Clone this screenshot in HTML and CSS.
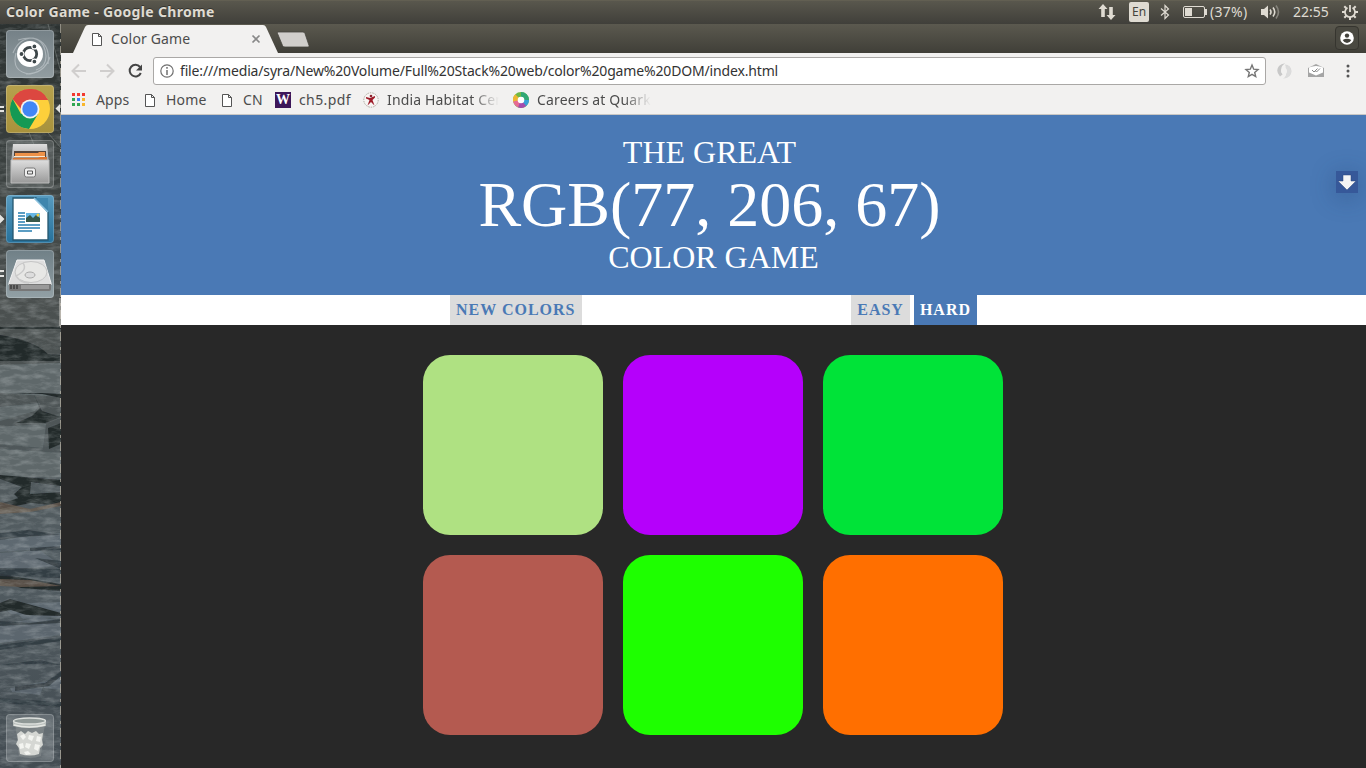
FILE: index.html
```html
<!DOCTYPE html>
<html lang="en">
<head>
<meta charset="utf-8">
<title>Color Game</title>
<link rel="stylesheet" href="styles.css">
</head>
<body>
<div class="desktop">
  <header class="panel">
    <span class="panel-title">Color Game - Google Chrome</span>
    <div class="indicators">
      <svg class="i-net" width="18" height="16" viewBox="0 0 18 16"><path d="M5 0L9.500 5H6.800V13H3.200V5H.5zM13 16L8.500 11H11.200V3H14.800V11H17.500z" fill="#dfdbd2"/></svg>
      <span class="i-lang">En</span>
      <svg class="i-bt" width="10" height="16" viewBox="0 0 10 16"><path d="M1 4.500L8.500 11L5 14.500V1.500L8.500 5L1 11.500" fill="none" stroke="#dfdbd2" stroke-width="1.200"/></svg>
      <svg class="i-bat" width="24" height="12" viewBox="0 0 24 12"><rect x=".5" y=".5" width="21" height="11" rx="1.500" fill="none" stroke="#dfdbd2"/><path d="M2 2h7v8H2zM22 3h2v6h-2z" fill="#dfdbd2"/></svg>
      <span class="i-pct">(37%)</span>
      <svg class="i-vol" width="20" height="16" viewBox="0 0 20 16"><path d="M0 5h3l4-3.500v13L3 11H0z" fill="#dfdbd2"/><path d="M9 5.500q2 2.500 0 5M12 3.500q3.500 4.500 0 9" fill="none" stroke="#dfdbd2" stroke-width="1.600"/><path d="M15 1.500q5 6.500 0 13" fill="none" stroke="#85837b" stroke-width="1.600"/></svg>
      <span class="i-time">22:55</span>
      <svg class="i-gear" width="16" height="16" viewBox="0 0 16 16"><g fill="none" stroke="#dfdbd2"><path d="M5.500 3.800A5 5 0 1 0 10.500 3.800" stroke-width="1.700"/><path d="M8 1v7" stroke-width="1.800"/><path d="M2.300 2.300l2 2M13.700 2.300l-2 2M0 8h3M13 8h3M2.300 13.700l2-2M13.700 13.700l-2-2M8 13v3" stroke-width="2"/></g></svg>
    </div>
  </header>

  <div class="workspace">
    <aside class="launcher">
      <svg class="wallpaper" width="61" height="744" viewBox="0 24 61 744">
        <defs>
          <linearGradient id="stone" x1="0" y1="0" x2="0" y2="1"><stop offset="0" stop-color="#2c3231"/><stop offset=".2" stop-color="#3b4140"/><stop offset=".36" stop-color="#4a4f4e"/><stop offset=".5" stop-color="#4d5455"/><stop offset=".7" stop-color="#535d62"/><stop offset="1" stop-color="#434c52"/></linearGradient>
          <filter id="grain" x="0" y="0" width="1" height="1"><feTurbulence type="fractalNoise" baseFrequency=".07 .2" numOctaves="4" seed="8"/><feColorMatrix values="0 0 0 0 .62  0 0 0 0 .66  0 0 0 0 .67  1.600 0 0 0 -.65"/></filter>
          <filter id="soft"><feGaussianBlur stdDeviation=".7"/></filter>
        </defs>
        <path d="M0 24h61v744H0z" fill="url(#stone)"/>
        <g filter="url(#soft)">
          <path d="M0 365l61-2v34l-61-4zM0 407l40-4-5 8-35 10zM0 427l46-3-3 24-43-4zM0 449l61 4v24H0z" fill="#5e686a"/>
          <path d="M0 537h28l33-3v14l-61 4zM32 537l29-4v14l-26-2zM0 553l40-3 21 16-61 4zM0 604l61-2v16l-50-4zM10 606l51-3v14l-38 2zM0 625l40-8 21 4v14l-61 8zM44 682l17-6v14l-17-2zM10 688l35-7-5 14-28-3z" fill="#66727a" opacity=".6"/>
          <path d="M0 329h61v-2H0zM0 335c20 3 38 9 48 19l13 1v6H0zM0 394l42 0 19 4v-4l-19-1zM34 395l8 16 19 6-16 6h-29l16-7 8-8zM48 428l13-5v21l-12 5zM0 475l61 5v6l-30-4-1 12-10 6-6-6 8-7-22-8zM0 603l10-4 51 14v3l-35-1-15-5-11 2zM0 574l61 10v7l-40-3-21-7zM31 494l30-2v14l-30-3-31 6v-5z" fill="#232a2c"/>
          <path d="M0 533l28-3 33 5-32 1-29 4zM30 548l31-2v4l-31 1zM0 568l61 1-26-11 26 3v17l-61-2zM0 645l61-8v4l-61 9zM15 686l30-3 16-12v5l-12 10-34 5zM0 698l61 4v5l-61-4zM0 665l40-5 21 5-30-1zM0 621l30 2 31-4v4l-61 3z" fill="#303a40" opacity=".85"/>
          <path d="M0 502l30 7 31-7v4l-31 6-30 2zM0 579l30 1 31 6-40 1-21-1z" fill="#6b5e50" opacity=".75"/>
        </g>
        <path d="M0 24h61v744H0z" filter="url(#grain)" opacity=".4"/>
        <path d="M28 130l18 44M35 118l26 30M48 24l12 45" stroke="#aab1ad" stroke-width="1" opacity=".35"/>
        <path d="M60.500 24v744" stroke="#b9b3a5" stroke-dasharray="9 6 3 4" opacity=".7"/>
        <path d="M60 298v28" stroke="#d5d2cc" stroke-width="1"/>
        <path d="M0 106h4v2H0zM0 110h4v2H0zM0 270h4v2H0zM0 275h4v2H0zM0 214.500l4.500 4.500-4.500 4.500zM60 104l-4.500 4.500 4.500 4.500z" fill="#e4e4e1"/>
      </svg>

      <div class="tiles">
        <div class="tile dash"><svg width="48" height="48"><g fill="none" stroke="#d4dadd" stroke-width="1.200" opacity=".5"><path d="M12 10Q38 2 40 26Q40 37 30 40M10 23Q5 42 24 44M7 23Q13 8 27 8Q45 12 42 34M20 44Q38 44 44 27"/></g><circle cx="24" cy="24" r="13" fill="#fff"/><circle cx="24" cy="24" r="6.700" fill="none" stroke="#3e474a" stroke-width="2.800"/><g fill="#3e474a" stroke="#fff" stroke-width="1.200"><circle cx="15.500" cy="24" r="2.500"/><circle cx="28.400" cy="16.400" r="2.500"/><circle cx="28.400" cy="31.600" r="2.500"/></g></svg></div>
        <div class="tile chrome-tile"><svg width="48" height="48"><circle cx="24" cy="24" r="20" fill="#fdd03b"/><path d="M24 24L6.700 14A20 20 0 0 1 42 15H24z" fill="#de4a42"/><path d="M24 24L15 29L6.700 14A20 20 0 0 0 23 44l9-15z" fill="#149954"/><path d="M6.700 14A20 20 0 0 1 42 15H24q-8 0-9 9z" fill="#dc4740"/><circle cx="24" cy="24" r="9.500" fill="#f3f4f1"/><circle cx="24" cy="24" r="7.700" fill="#4286f5"/></svg></div>
        <div class="tile files"><svg width="48" height="48"><defs><linearGradient id="cab" x2="0" y2="1"><stop stop-color="#dedede"/><stop offset="1" stop-color="#999"/></linearGradient></defs><path d="M7 4h34l2 20H5z" fill="url(#cab)"/><path d="M8 11h32v11H8z" fill="#55443a"/><path d="M9 13h23l1-1h6v5H9z" fill="#ed9148"/><path d="M8 16h31v1.500H8z" fill="#f7e7d2"/><path d="M7 18h25l2-1h7v5H7z" fill="#d9742f"/><path d="M5 20h38v23H5z" fill="url(#cab)" stroke="#bdbdbd"/><rect x="18.500" y="28" width="11" height="9" rx="2" fill="#eee" stroke="#777"/><path d="M21.500 31h5v3h-5z" fill="#eee" stroke="#555"/></svg></div>
        <div class="tile writer"><svg width="48" height="48"><path d="M7 3h23l12 14v28H7z" fill="#fff" stroke="#26566e" stroke-width="1.300"/><path d="M28 3h14v15z" fill="#3f86ae"/><path d="M28 3l14 14" stroke="#8cc1dd" stroke-width="1.500"/><path d="M20 18h14v9H20z" fill="#66b6e4"/><path d="M20 27v-4l4-3 3 3 3-3 4 3v4z" fill="#36584b"/><circle cx="32" cy="20" r="1.500" fill="#f1cf43"/><path d="M12 18h7M12 21h7M12 24h7M12 27h7M12 30h22M12 33h22M12 36h14" stroke="#267db0" stroke-width="1.500"/></svg></div>
        <div class="tile drive"><svg width="48" height="48"><path d="M11 10h27l7 23v2H3v-2z" fill="#dedede" stroke="#f3f3f3"/><path d="M3 34h42v5q0 2-2 2H5q-2 0-2-2z" fill="#777"/><path d="M15 35h28v4H15z" fill="#9a9a9a"/><path d="M5 35v4M8 35v4M11 35v4" stroke="#222"/><ellipse cx="25" cy="22" rx="16" ry="10.500" fill="#e7e7e5" stroke="#c5c5c5"/><ellipse cx="24" cy="25" rx="5" ry="3" fill="#ddd" stroke="#aaa"/><path d="M17 13q5 7-7 13 4 7 13 7" fill="none" stroke="#cacaca" stroke-width="1.500"/></svg></div>
        <div class="tile trash"><svg width="48" height="48"><path d="M9 8l4 34q11 4 22 0l4-34z" fill="#8d9493" opacity=".5"/><path d="M11 20l4-3 4 3 3-3 4 2 4-2 3 3 4-1-1 7 1 5-3 3-1 6q-9 3-19 0l-1-6-3-4 2-4z" fill="#d5d7d3"/><path d="M14 22l4-2 2 3-3 3zM23 21l5 1-2 5-4-2zM31 22l4 1-1 5-4-1zM13 30l4-1 1 5-4 1zM20 29l5 1-2 5-4-2zM29 30l5 1-2 6-4-2zM18 38l4-1 3 3-5 1z" fill="#f3f4f0"/><path d="M7 7q17-5 33 0v5q-16 4-33 0z" fill="#b9bfbc"/><ellipse cx="23.500" cy="7" rx="16" ry="3" fill="#8f9896" stroke="#dcdfdc" stroke-width="1.300"/><path d="M8 11q15 4 31 0" stroke="#e5e7e3" stroke-width="1.300" fill="none"/></svg></div>
      </div>
    </aside>

    <main class="browser">
      <div class="tabstrip">
        <svg class="tab-shape" width="250" height="29" viewBox="0 0 250 29"><path d="M12 29L24 3Q25 1 27 1H202Q204 1 205 3L217 29z" fill="#f2f1f0"/><path d="M217 8h25q1.500 0 2 1.500l4 12q.5 1.500-1 1.500h-23q-2 0-2.500-1.500l-5-12q-.5-1.500.5-1.500z" fill="#d0cecb" stroke="#45443d" stroke-width=".8"/></svg>
        <div class="tab">
          <svg class="doc" width="12" height="15" viewBox="0 0 12 15"><path d="M1.500 1.500h6l3 3v9h-9zM7.500 1.500v3h3" fill="#fff" stroke="#555"/></svg>
          <span class="tab-title">Color Game</span>
          <svg width="10" height="10" viewBox="0 0 10 10"><path d="M1.500 1.500l7 7M8.500 1.500l-7 7" stroke="#888" stroke-width="1.700"/></svg>
        </div>
        <div class="profile"><svg width="14" height="14" viewBox="0 0 14 14"><circle cx="7" cy="7" r="6.800" fill="#fff"/><circle cx="7" cy="4.600" r="2.200" fill="#43423c"/><path d="M2.700 9q4.300-2.600 8.600 0-1.500 3-4.300 3T2.700 9z" fill="#43423c"/></svg></div>
      </div>

      <div class="toolbar">
        <svg class="nav-icons" width="75" height="18" viewBox="0 0 75 18"><path d="M15 9H2M8 2.500L1.500 9 8 15.500M29 9h13M36 2.500L42.500 9 36 15.500" fill="none" stroke="#d0cecd" stroke-width="2"/><path d="M69 5A5.800 5.800 0 1 0 69.800 11" fill="none" stroke="#444" stroke-width="2"/><path d="M71 2.500v6h-6z" fill="#444"/></svg>
        <div class="omnibox">
          <svg width="14" height="14" viewBox="0 0 14 14"><circle cx="7" cy="7" r="6.200" fill="none" stroke="#707070" stroke-width="1.200"/><path d="M7 6v5M7 3v1.700" stroke="#707070" stroke-width="1.500"/></svg>
          <span class="url">file:///media/syra/New%20Volume/Full%20Stack%20web/color%20game%20DOM/index.html</span>
          <svg class="star" width="16" height="16" viewBox="0 0 16 16"><path d="M8 2L9.700 6.200l4.300.3-3.300 2.900 1 4.200L8 11.400l-3.700 2.200 1-4.200L2 6.500l4.300-.3z" fill="none" stroke="#757575" stroke-width="1.400"/></svg>
        </div>
        <svg class="ext1" width="16" height="16" viewBox="0 0 16 16"><path d="M9 1.500A6.500 6.500 0 0 1 8.500 15q4-5 .5-13.500z" fill="#dadada"/><path d="M13 2.500Q17.500 8 13 13 10 16 7 15.500 13.500 12 9.500 4.500z" fill="#dcdcdc"/><path d="M4 13.500Q-1 8 3 3 6 0 9 .5 3 4 6.500 11.500z" fill="#c8c8c8"/><circle cx="8" cy="8" r="3" fill="#f2f1f0"/></svg>
        <svg class="ext2" width="16" height="14" viewBox="0 0 16 14"><path d="M0 4l8-4 8 4v9H0z" fill="#a5a5a5"/><path d="M1 3.500q7-3 14 0v5l-7 3-7-3z" fill="#fff"/><path d="M4 6l2 2 3.500-3.500M7.500 7l1 1L12 4.500" fill="none" stroke="#888"/></svg>
        <svg class="more" width="4" height="14" viewBox="0 0 4 14"><g fill="#555"><circle cx="2" cy="2" r="1.500"/><circle cx="2" cy="7" r="1.500"/><circle cx="2" cy="12" r="1.500"/></g></svg>
      </div>

      <nav class="bookmarks">
        <a class="bm bm-apps"><svg width="14" height="14" viewBox="0 0 14 14"><path d="M0 0h3v3H0zM5 0h3v3H5zM10 0h3v3h-3z" fill="#f23a30"/><path d="M0 5h3v3H0zM0 10h3v3H0z" fill="#30a653"/><path d="M5 5h3v3H5z" fill="#3c7cf3"/><path d="M10 5h3v3h-3zM10 10h3v3h-3z" fill="#f9b62d"/><path d="M5 10h3v3H5z" fill="#30a653"/></svg><span>Apps</span></a>
        <a class="bm bm-home"><svg width="12" height="15" viewBox="0 0 12 15"><path d="M1.500 1.500h6l3 3v9h-9zM7.500 1.500v3h3" fill="#fff" stroke="#555"/></svg><span>Home</span></a>
        <a class="bm bm-cn"><svg width="12" height="15" viewBox="0 0 12 15"><path d="M1.500 1.500h6l3 3v9h-9zM7.500 1.500v3h3" fill="#fff" stroke="#555"/></svg><span>CN</span></a>
        <a class="bm bm-pdf"><i class="w-logo">W</i><span>ch5.pdf</span></a>
        <a class="bm bm-india"><svg width="16" height="16" viewBox="0 0 16 16"><circle cx="8" cy="8" r="7.200" fill="#f7f5f3" stroke="#aaa79d" stroke-dasharray="1.500 1"/><path d="M3 5l4 1 5-2v1.500L9.500 8l2 5.500L8 10l-3.500 3.500L6.500 8 3 6.500z" fill="#9e1c29"/><circle cx="8" cy="4" r="1.300" fill="#8d2430"/></svg><span>India Habitat Cen</span></a>
        <a class="bm bm-quark"><svg width="16" height="16" viewBox="0 0 16 16"><g fill="none" stroke-width="5"><circle cx="8" cy="8" r="5.500" stroke="#6fb846"/><path d="M8 2.500A5.500 5.500 0 0 1 13.500 8" stroke="#31a875"/><path d="M13.500 8A5.500 5.500 0 0 1 11 12.500" stroke="#38a0d8"/><path d="M11.500 12A5.500 5.500 0 0 1 5 12.500" stroke="#a54bae"/><path d="M6 13A5.500 5.500 0 0 1 2.500 8" stroke="#e66b94"/><path d="M2.500 9A5.500 5.500 0 0 1 4 4" stroke="#edb732"/></g><circle cx="8" cy="8" r="3.300" fill="#fff"/></svg><span>Careers at Quark</span></a>
      </nav>

      <section class="page">
        <h1 class="title">The Great<br><span class="color-display">rgb(77, 206, 67)</span><br><span class="subtitle">Color Game</span></h1>
        <div class="stripe">
          <button class="new">New Colors</button>
          <div class="modes"><button>Easy</button><button class="selected">Hard</button></div>
        </div>
        <div class="squares">
          <div class="square lime"></div><div class="square purple"></div><div class="square emerald"></div>
          <div class="square brick"></div><div class="square green"></div><div class="square orange"></div>
        </div>
        <div class="download"><svg width="22" height="22" viewBox="0 0 22 22"><path d="M7 4h8v6h5l-9 9-9-9h5z" fill="#f5f5f5" stroke="#29457c" stroke-width=".5"/></svg></div>
      </section>
    </main>
  </div>
</div>
</body>
</html>
```
FILE: styles.css
```css
* { box-sizing: border-box; }
body { margin: 0; font-family: "Noto Sans", "Open Sans", sans-serif; }
svg { display: block; flex: none; }
.desktop { width: 1366px; height: 768px; overflow: hidden; display: flex; flex-direction: column; }
.panel { height: 24px; flex: none; display: flex; align-items: center; justify-content: space-between; padding: 0 8px 0 6px; background: linear-gradient(#59574d, #403f3a); color: #dfdbd2; border-top: 1px solid #625f52; }
.panel-title { margin-top: -2px; font-size: 14px; font-weight: 700; line-height: 22px; letter-spacing: .32px; white-space: nowrap; text-shadow: 0 -1px #33322d; }
.indicators { display: flex; align-items: center; margin-top: -1px; font-size: 14px; line-height: 22px; }
.i-lang { width: 20px; height: 20px; margin: 0 11px 0 13px; border-radius: 2px; background: #dfdbd2; color: #45443d; font-size: 12px; line-height: 20px; text-align: center; }
.i-bat { margin-left: 13px; }
.i-pct { width: 39px; margin-left: 3px; letter-spacing: .3px; }
.i-vol { margin-left: 12px; }
.i-time { width: 37px; margin: 0 12px; letter-spacing: 0; }
.workspace { flex: 1; display: flex; min-height: 0; }
.launcher { width: 61px; flex: none; position: relative; }
.wallpaper { position: absolute; inset: 0; }
.tiles { position: relative; height: 744px; display: flex; flex-direction: column; gap: 7px; padding: 6px 0 6px 6px; }
.tile { width: 48px; height: 48px; border-radius: 4px; flex: none; box-shadow: inset 0 0 0 1px rgba(255,255,255,.2); }
.dash { background: linear-gradient(#758187, #929da1); }
.chrome-tile { background: linear-gradient(#b6a14d, #a8923c); }
.files { background: rgba(135,140,140,.35); }
.writer { background: linear-gradient(#589bbf, #26719b); }
.drive { background: linear-gradient(#708087, #92a0a5); }
.trash { margin-top: auto; background: rgba(175,183,184,.3); }
.browser { flex: 1; min-width: 0; background: #f2f1f0; display: flex; flex-direction: column; }
.tabstrip { height: 29px; flex: none; position: relative; display: flex; justify-content: space-between; background: linear-gradient(#5b594f, #403f38); }
.tab-shape { position: absolute; left: 0; top: 0; }
.tab { position: relative; display: flex; align-items: center; padding: 1px 0 0 30px; }
.tab-title { width: 140px; margin: 0 0 0 8px; font-size: 14px; line-height: 20px; letter-spacing: .15px; color: #4c4c4c; }
.profile { width: 24px; height: 24px; margin: 2px 7px 0 0; border: 1px solid #36352f; border-radius: 4px; display: grid; place-items: center; background: #4a4941; }
.toolbar { height: 36px; flex: none; display: flex; align-items: center; padding-left: 10px; }
.nav-icons { margin-right: 7px; }
.omnibox { width: 1113px; height: 28px; border: 1px solid #aaa8a6; border-radius: 3px; background: #fff; display: flex; align-items: center; padding: 0 5px 0 6px; }
.url { margin-left: 6px; flex: 1; font-size: 14px; line-height: 24px; letter-spacing: -.16px; color: #333; white-space: nowrap; }
.ext1 { margin-left: 10px; }
.ext2 { margin-left: 16px; }
.more { margin-left: 22px; }
.bookmarks { height: 26px; flex: none; display: flex; align-items: center; padding: 0 0 3px 11px; border-bottom: 1px solid #c9c7c4; font-size: 14px; line-height: 20px; letter-spacing: .15px; color: #4c4c4c; }
.bm { display: flex; align-items: center; gap: 10px; flex: none; white-space: nowrap; }
.bm-apps { width: 72px; }
.bm-home { width: 77px; }
.bm-cn { width: 54px; }
.bm-pdf { width: 88px; gap: 8px; letter-spacing: .4px; }
.w-logo { width: 16px; height: 16px; background: #3d1659; color: #fff; font: bold 14px/16px "Liberation Serif", serif; letter-spacing: 0; text-align: center; }
.bm-india { width: 136px; margin-right: 14px; gap: 8px; -webkit-mask-image: linear-gradient(90deg, #000 80%, transparent); mask-image: linear-gradient(90deg, #000 80%, transparent); }
.bm-quark { width: 138px; gap: 8px; -webkit-mask-image: linear-gradient(90deg, #000 80%, transparent); mask-image: linear-gradient(90deg, #000 80%, transparent); }
.page { flex: 1; position: relative; background: #282828; font-family: "Liberation Serif", serif; }
.title { height: 180px; margin: 0; padding: 20px 8px 20px 0; background: #4a79b5; color: #fff; font-size: 32px; font-weight: 400; line-height: 35px; text-align: center; text-transform: uppercase; }
.color-display { font-size: 64px; line-height: 70px; }
.subtitle { padding-left: 8px; }
.stripe { height: 30px; background: #fff; display: flex; justify-content: space-between; padding: 0 389px; }
.modes { display: flex; gap: 4px; }
.stripe button { height: 30px; border: 0; margin: 0; padding: 0 6px; background: #dcdcdc; color: #4a79b5; font: bold 16px/30px "Liberation Serif", serif; letter-spacing: 1px; text-transform: uppercase; }
.stripe .selected { background: #4a79b5; color: #fff; }
.squares { display: grid; grid-template-columns: repeat(3, 180px); grid-auto-rows: 180px; gap: 20px; padding: 30px 0 0 362px; }
.square { border-radius: 27px; }
.lime { background: #afe182; }
.purple { background: #b500fb; }
.emerald { background: #00e338; }
.brick { background: #b45a50; }
.green { background: #1eff00; }
.orange { background: #ff6f00; }
.download { position: absolute; right: 8px; top: 56px; width: 22px; height: 22px; background: #365899; box-shadow: 0 4px 24px rgba(32,65,116,.45); }
```
